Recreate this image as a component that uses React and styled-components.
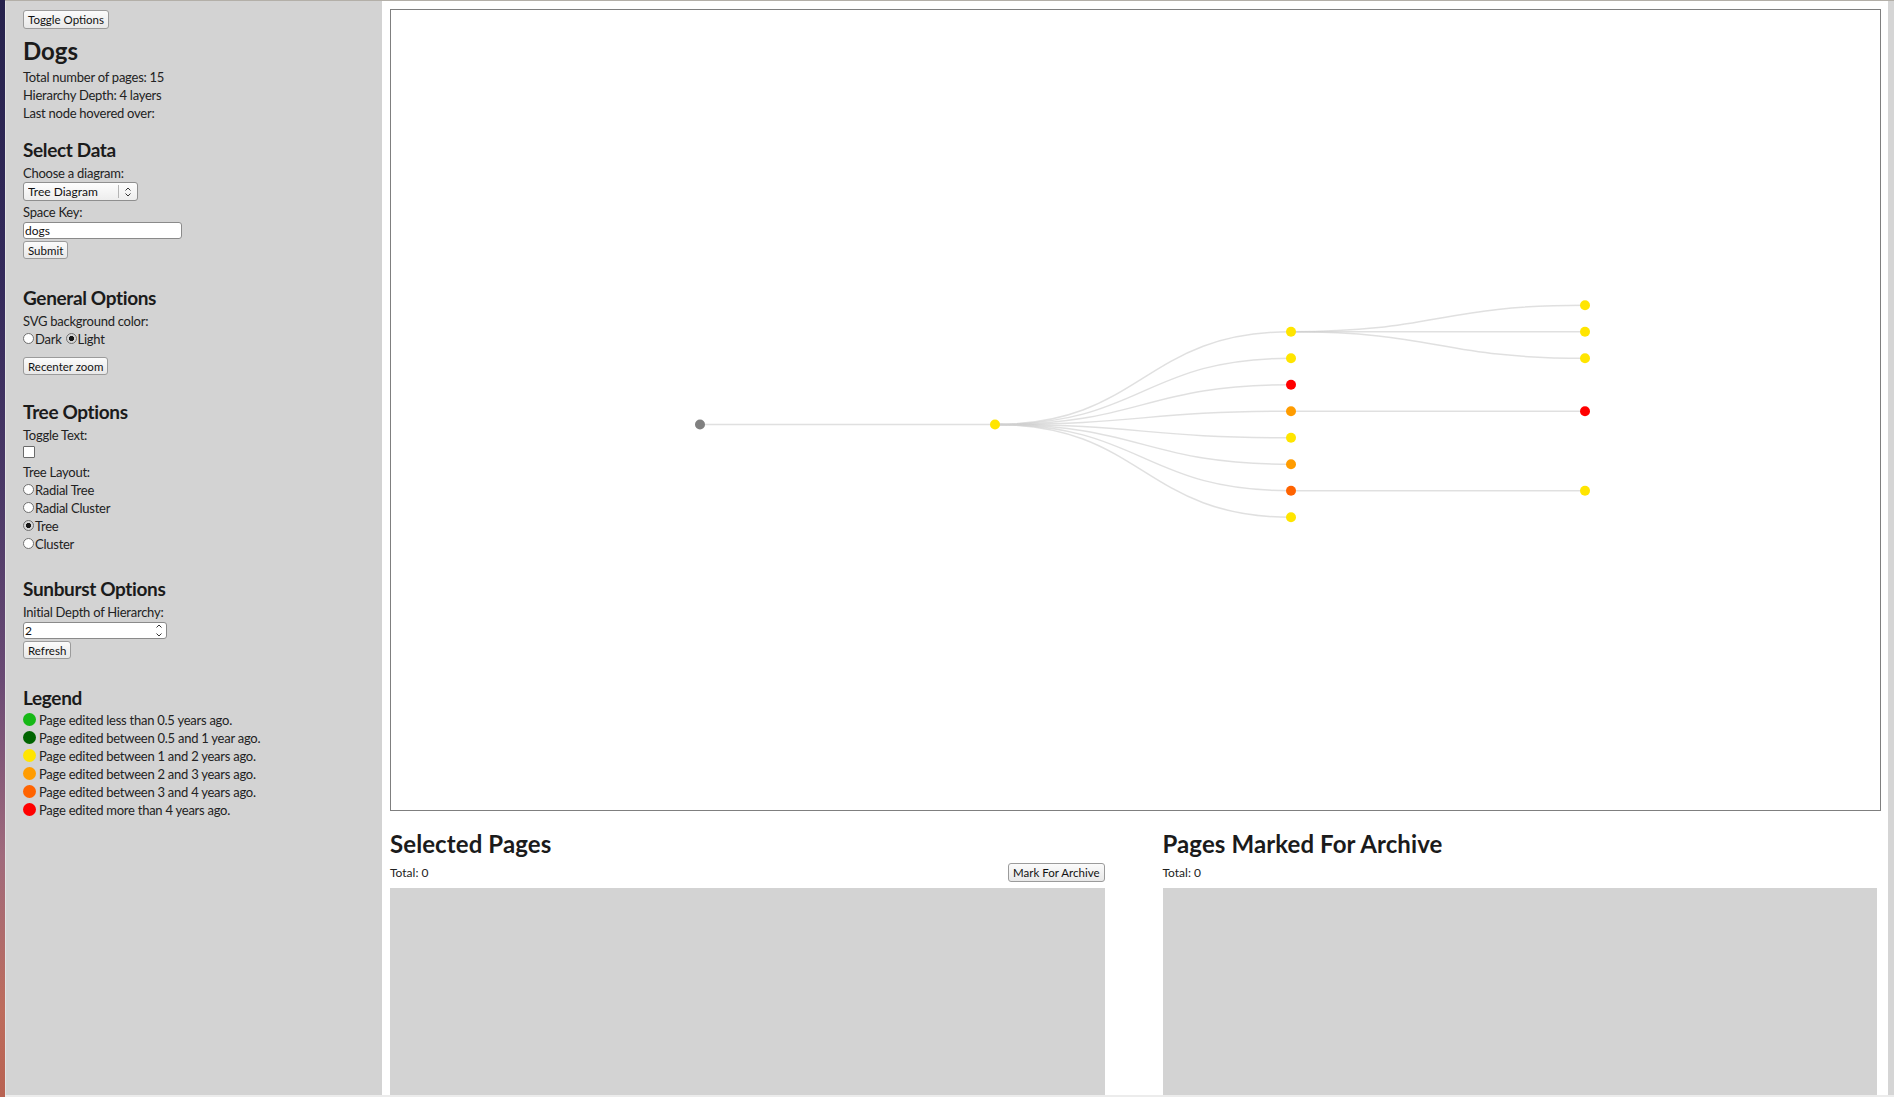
import React from "react";
import styled, { createGlobalStyle } from "styled-components";

const GlobalStyle = createGlobalStyle`
  html, body {
    margin: 0;
    padding: 0;
    height: 100%;
    overflow: hidden;
  }
  body {
    font-family: Lato, "Open Sans", sans-serif;
    font-size: 13px;
    letter-spacing: -0.25px;
    color: #222;
  }
  #root {
    height: 100%;
  }
`;

const COLORS = {
  root: "#808080",
  green: "#16b816",
  darkGreen: "#006400",
  yellow: "#ffe500",
  orange: "#ff9c00",
  darkOrange: "#ff6300",
  red: "#ff0000",
};

const Desktop = styled.div`
  display: flex;
  height: 100vh;
`;

const Wallpaper = styled.div`
  width: 5px;
  flex-shrink: 0;
  background: linear-gradient(
    to bottom,
    #26224c 0%,
    #33295a 25%,
    #4a3866 45%,
    #6a4a74 62%,
    #a06a7c 78%,
    #bd6c5c 92%,
    #b86252 100%
  );
`;

const Window = styled.div`
  flex: 1;
  min-width: 0;
  display: flex;
  flex-direction: column;
  border-top: 1px solid #b3afa8;
  border-bottom: 2px solid #ececec;
`;

const Body = styled.div`
  flex: 1;
  min-height: 0;
  display: flex;
  overflow: hidden;
`;

const Sidebar = styled.aside`
  width: 377px;
  flex-shrink: 0;
  box-sizing: border-box;
  background: #d3d3d3;
  border-left: 1px solid #e2e2e2;
  padding: 9px 0 0 17px;
`;

const Main = styled.main`
  flex: 1;
  min-width: 0;
  display: flex;
  flex-direction: column;
  background: #fff;
  padding: 8px 7px 0 8px;
  overflow: hidden;
`;

const ScrollTrack = styled.div`
  width: 6px;
  flex-shrink: 0;
  background: #d5d5d5;
`;

const Button = styled.button`
  display: block;
  height: ${(p) => p.$h || 18}px;
  margin: ${(p) => p.$m || "0"};
  padding: 0 4px;
  font-family: Lato, "Open Sans", sans-serif;
  font-size: 11.5px;
  letter-spacing: 0;
  color: #111;
  background: linear-gradient(#fbfbfb, #e8e8e8);
  border: 1px solid #9b9b9b;
  border-radius: 3px;
  white-space: nowrap;
`;

const Title = styled.h1`
  margin: 8px 0 0;
  font-size: 24px;
  line-height: 28px;
  font-weight: 700;
  letter-spacing: 0;
  color: #1b1b1b;
`;

const Info = styled.div`
  margin-top: 3px;
`;

const Line = styled.div`
  font-size: 13px;
  line-height: 18px;
`;

const Section = styled.section`
  margin-top: ${(p) => p.$gap}px;
`;

const SectionTitle = styled.h3`
  margin: 0 0 ${(p) => p.$mb ?? 3}px;
  font-size: 19px;
  line-height: 22px;
  font-weight: 700;
  letter-spacing: -0.35px;
  color: #1b1b1b;
`;

const SelectBox = styled.div`
  display: flex;
  align-items: center;
  width: 115px;
  height: 19px;
  box-sizing: border-box;
  border: 1px solid #8f8f8f;
  border-radius: 3px;
  background: linear-gradient(#fdfdfd, #ededed);
  margin-bottom: 2px;
`;

const NativeSelect = styled.select`
  appearance: none;
  flex: 1;
  min-width: 0;
  height: 100%;
  border: 0;
  background: transparent;
  padding: 0 0 0 4px;
  font-family: Lato, "Open Sans", sans-serif;
  font-size: 12px;
  color: #111;
  outline: none;
`;

const Divider = styled.span`
  width: 1px;
  height: 13px;
  background: #b5b5b5;
`;

const ArrowCell = styled.span`
  width: 18px;
  display: flex;
  align-items: center;
  justify-content: center;
`;

const TextInput = styled.input`
  display: block;
  width: ${(p) => p.$w}px;
  height: 17px;
  box-sizing: border-box;
  margin: 1px 0 2px;
  padding: 0 1px;
  border: 1px solid #8a8a8a;
  border-radius: 3px;
  background: #fff;
  font-family: Lato, "Open Sans", sans-serif;
  font-size: 12px;
  color: #111;
  outline: none;
`;

const NumberBox = styled.div`
  display: flex;
  align-items: center;
  width: 144px;
  height: 17px;
  box-sizing: border-box;
  margin: 1px 0 2px;
  border: 1px solid #8a8a8a;
  border-radius: 3px;
  background: #fff;
`;

const NumberField = styled.input`
  flex: 1;
  min-width: 0;
  border: 0;
  padding: 0 1px;
  font-family: Lato, "Open Sans", sans-serif;
  font-size: 12px;
  color: #111;
  background: transparent;
  outline: none;
`;

const Spinner = styled.span`
  display: flex;
  width: 14px;
  justify-content: center;
`;

const OptionRow = styled.label`
  display: flex;
  align-items: center;
  height: 18px;
  font-size: 13px;
`;

const Radio = styled.input.attrs({ type: "radio" })`
  appearance: none;
  width: 11px;
  height: 11px;
  margin: 0 1px 1px 0;
  box-sizing: border-box;
  border: 1px solid #707070;
  border-radius: 50%;
  background: #fff;
  &:checked {
    background: radial-gradient(circle, #161616 0 2.3px, #d6d6d6 2.9px);
  }
`;

const RadioGap = styled.span`
  width: 4px;
`;

const Checkbox = styled.input.attrs({ type: "checkbox" })`
  appearance: none;
  display: block;
  width: 12px;
  height: 12px;
  margin: 2px 0 5px;
  box-sizing: border-box;
  border: 1px solid #6a6a6a;
  border-radius: 1px;
  background: #fff;
`;

const LegendItem = styled.div`
  display: flex;
  align-items: center;
  height: 18px;
  font-size: 13px;
  gap: 3px;
`;

const Dot = styled.span`
  width: 13px;
  height: 13px;
  margin-bottom: 2px;
  border-radius: 50%;
  background: ${(p) => p.$color};
`;

const Chart = styled.div`
  height: 802px;
  flex-shrink: 0;
  box-sizing: border-box;
  border: 1px solid #7f7f7f;
  background: #fff;
`;

const Panels = styled.div`
  display: grid;
  grid-template-columns: 1fr 1fr;
  column-gap: 58px;
  padding-right: 4px;
  margin-top: 19px;
`;

const Panel = styled.div`
  display: flex;
  flex-direction: column;
`;

const PanelTitle = styled.h2`
  margin: 0;
  font-size: 24px;
  line-height: 28px;
  font-weight: 700;
  letter-spacing: 0.1px;
  color: #1b1b1b;
`;

const TotalRow = styled.div`
  display: flex;
  align-items: center;
  justify-content: space-between;
  height: 19px;
  margin-top: 5px;
  font-size: 12px;
  letter-spacing: 0;
`;

const PageList = styled.div`
  height: 260px;
  margin-top: 6px;
  background: #d3d3d3;
`;

const UpDown = ({ h = 12 }) => (
  <svg width="8" height={h} viewBox={`0 0 8 ${h}`}>
    <path
      d={`M1.5 4.5 L4 2 L6.5 4.5 M1.5 ${h - 4.5} L4 ${h - 2} L6.5 ${h - 4.5}`}
      fill="none"
      stroke="#333"
      strokeWidth="1"
    />
  </svg>
);

// tree layout in chart-local pixels
const X = [309, 604, 900, 1194];
const CY = 414.5;
const DY = 26.5;

const level2 = [
  COLORS.yellow,
  COLORS.yellow,
  COLORS.red,
  COLORS.orange,
  COLORS.yellow,
  COLORS.orange,
  COLORS.darkOrange,
  COLORS.yellow,
].map((color, i) => ({ x: X[2], y: CY + (i - 3.5) * DY, color }));

const level3 = [
  { parent: 0, offset: -1, color: COLORS.yellow },
  { parent: 0, offset: 0, color: COLORS.yellow },
  { parent: 0, offset: 1, color: COLORS.yellow },
  { parent: 3, offset: 0, color: COLORS.red },
  { parent: 6, offset: 0, color: COLORS.yellow },
].map((c) => ({
  x: X[3],
  y: level2[c.parent].y + c.offset * DY,
  color: c.color,
  parent: level2[c.parent],
}));

const rootNode = { x: X[0], y: CY, color: COLORS.root };
const hub = { x: X[1], y: CY, color: COLORS.yellow };

const link = (s, t) => {
  const mx = (s.x + t.x) / 2;
  return `M${s.x},${s.y}C${mx},${s.y} ${mx},${t.y} ${t.x},${t.y}`;
};

function TreeChart() {
  const links = [
    [rootNode, hub],
    ...level2.map((n) => [hub, n]),
    ...level3.map((n) => [n.parent, n]),
  ];
  const nodes = [rootNode, hub, ...level2, ...level3];
  return (
    <svg width="100%" height="100%" style={{ display: "block" }}>
      <g fill="none" stroke="#cfcfcf" strokeOpacity="0.65" strokeWidth="1.5">
        {links.map(([s, t], i) => (
          <path key={i} d={link(s, t)} />
        ))}
      </g>
      {nodes.map((n, i) => (
        <circle key={i} cx={n.x} cy={n.y} r="5" fill={n.color} />
      ))}
    </svg>
  );
}

const legend = [
  [COLORS.green, "Page edited less than 0.5 years ago."],
  [COLORS.darkGreen, "Page edited between 0.5 and 1 year ago."],
  [COLORS.yellow, "Page edited between 1 and 2 years ago."],
  [COLORS.orange, "Page edited between 2 and 3 years ago."],
  [COLORS.darkOrange, "Page edited between 3 and 4 years ago."],
  [COLORS.red, "Page edited more than 4 years ago."],
];

const layouts = [
  ["Radial Tree", false],
  ["Radial Cluster", false],
  ["Tree", true],
  ["Cluster", false],
];

function App() {
  return (
    <>
      <GlobalStyle />
      <Desktop>
        <Wallpaper />
        <Window>
          <Body>
            <Sidebar>
              <Button $h={19}>Toggle Options</Button>
              <Title>Dogs</Title>
              <Info>
                <Line>Total number of pages: 15</Line>
                <Line>Hierarchy Depth: 4 layers</Line>
                <Line>Last node hovered over:</Line>
              </Info>

              <Section $gap={17}>
                <SectionTitle>Select Data</SectionTitle>
                <Line>Choose a diagram:</Line>
                <SelectBox>
                  <NativeSelect defaultValue="tree">
                    <option value="tree">Tree Diagram</option>
                    <option value="sunburst">Sunburst</option>
                  </NativeSelect>
                  <Divider />
                  <ArrowCell>
                    <UpDown />
                  </ArrowCell>
                </SelectBox>
                <Line>Space Key:</Line>
                <TextInput $w={159} defaultValue="dogs" />
                <Button>Submit</Button>
              </Section>

              <Section $gap={28}>
                <SectionTitle>General Options</SectionTitle>
                <Line>SVG background color:</Line>
                <OptionRow>
                  <Radio name="bg" />
                  Dark
                  <RadioGap />
                  <Radio name="bg" defaultChecked />
                  Light
                </OptionRow>
                <Button $m="9px 0 0">Recenter zoom</Button>
              </Section>

              <Section $gap={26}>
                <SectionTitle>Tree Options</SectionTitle>
                <Line>Toggle Text:</Line>
                <Checkbox />
                <Line>Tree Layout:</Line>
                {layouts.map(([name, checked]) => (
                  <OptionRow key={name}>
                    <Radio name="layout" defaultChecked={checked} />
                    {name}
                  </OptionRow>
                ))}
              </Section>

              <Section $gap={25}>
                <SectionTitle>Sunburst Options</SectionTitle>
                <Line>Initial Depth of Hierarchy:</Line>
                <NumberBox>
                  <NumberField defaultValue="2" />
                  <Spinner>
                    <UpDown h={15} />
                  </Spinner>
                </NumberBox>
                <Button>Refresh</Button>
              </Section>

              <Section $gap={28}>
                <SectionTitle $mb={2}>Legend</SectionTitle>
                {legend.map(([color, text]) => (
                  <LegendItem key={text}>
                    <Dot $color={color} />
                    {text}
                  </LegendItem>
                ))}
              </Section>
            </Sidebar>

            <Main>
              <Chart>
                <TreeChart />
              </Chart>
              <Panels>
                <Panel>
                  <PanelTitle>Selected Pages</PanelTitle>
                  <TotalRow>
                    <span>Total: 0</span>
                    <Button $h={19}>Mark For Archive</Button>
                  </TotalRow>
                  <PageList />
                </Panel>
                <Panel>
                  <PanelTitle>Pages Marked For Archive</PanelTitle>
                  <TotalRow>
                    <span>Total: 0</span>
                  </TotalRow>
                  <PageList />
                </Panel>
              </Panels>
            </Main>
            <ScrollTrack />
          </Body>
        </Window>
      </Desktop>
    </>
  );
}

export default App;
